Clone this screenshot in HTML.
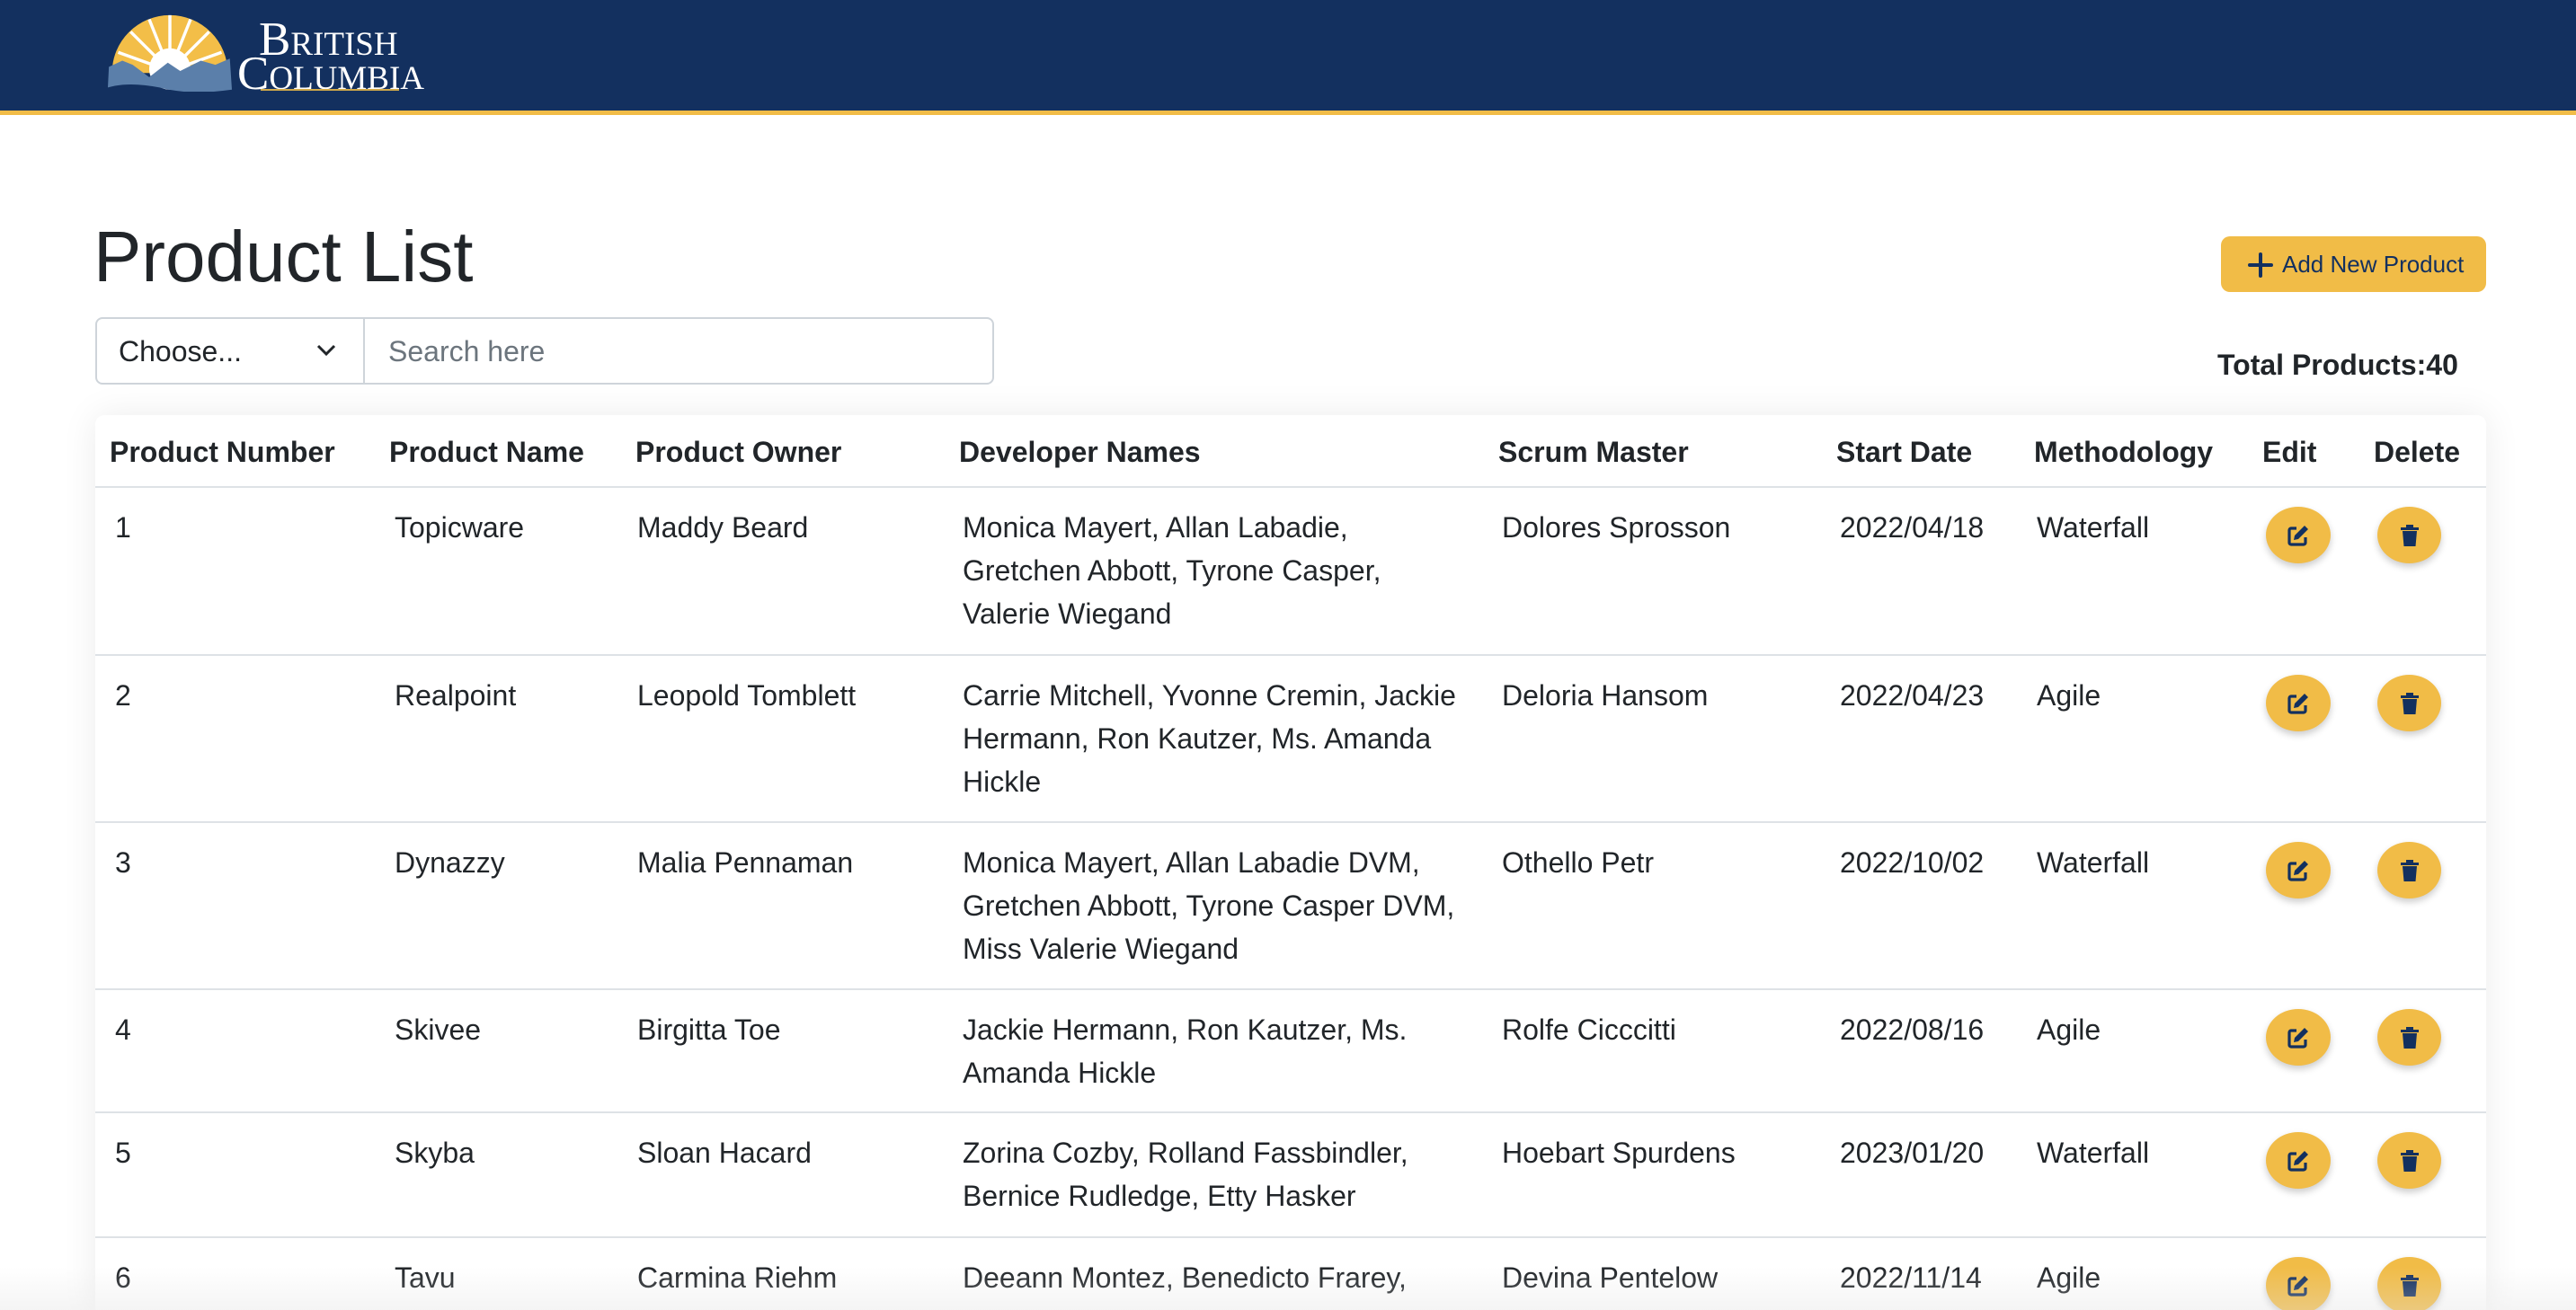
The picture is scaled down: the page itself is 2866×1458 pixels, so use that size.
<!DOCTYPE html>
<html><head><meta charset="utf-8"><style>
*{box-sizing:border-box;margin:0;padding:0}
html,body{width:2866px;height:1458px;overflow:hidden}
body{background:#fff;font-family:"Liberation Sans",Arial,sans-serif;color:#212529;position:relative}
.hdr{position:absolute;left:0;top:0;width:2866px;height:128px;background:#13305f;border-bottom:5px solid #f1bc47}
.bc{position:absolute;color:#fff;font-family:"Liberation Serif",serif;font-variant:small-caps;line-height:1}
h1{position:absolute;left:104px;top:246px;font-size:80px;font-weight:400;line-height:1;color:#212529}
.inp{position:absolute;left:106px;top:353px;width:1000px;height:75px;border:2px solid #ced4da;border-radius:8px;font-size:32px}
.sel{position:absolute;left:0;top:0;width:298px;height:71px;border-right:2px solid #ced4da;padding:18px 0 0 24px}
.ph{position:absolute;left:324px;top:18px;color:#6c757d}
.btn{position:absolute;left:2471px;top:263px;width:295px;height:62px;background:#f1bc47;border-radius:10px;color:#13305f;font-size:26px;padding:16px 0 0 68px}
.tot{position:absolute;left:2467px;top:388px;font-size:32px;font-weight:700}
.card{position:absolute;left:106px;top:462px;width:2660px;height:996px;background:#fff;border-radius:10px 10px 0 0;box-shadow:0 0 40px rgba(0,0,0,.08);overflow:hidden}
.row{position:absolute;left:0;width:2660px;border-bottom:2px solid #dee2e6}
.c{position:absolute;top:0;white-space:nowrap;font-size:32px;line-height:48px}
.h .c{font-weight:700;top:17px}
.b .c{top:20px}
.ib{position:absolute;top:21px;width:72px;height:63px;border-radius:50%;background:#f1bc47;box-shadow:0 4px 8px rgba(0,0,0,.2);display:flex;align-items:center;justify-content:center}
.fade{position:absolute;left:0;top:1410px;width:2866px;height:48px;background:linear-gradient(rgba(235,235,235,0),rgba(225,225,225,.35))}
</style></head><body>
<div class="hdr">
<svg style="position:absolute;left:120px;top:10px" width="138" height="92" viewBox="0 0 120 80">
<path d="M4 62 A56 56 0 0 1 116 62 Z" fill="#f3be48"/>
<g stroke="#fff" stroke-width="3">
<line x1="60" y1="60" x2="60" y2="6"/><line x1="60" y1="60" x2="40" y2="10"/><line x1="60" y1="60" x2="80" y2="10"/>
<line x1="60" y1="60" x2="22" y2="22"/><line x1="60" y1="60" x2="98" y2="22"/><line x1="60" y1="60" x2="10" y2="42"/><line x1="60" y1="60" x2="110" y2="42"/></g>
<circle cx="60" cy="58" r="20" fill="#fff"/>
<path d="M1 56 L14 50 L24 54 L40 66 L58 52 L70 60 L90 50 L104 54 L118 48 L120 78 Q80 84 50 76 Q20 70 0 76 Z" fill="#5b7faa"/>
</svg>
<div class="bc" style="left:288px;top:18px;font-size:53px">British</div>
<div class="bc" style="left:264px;top:56px;font-size:53px">Columbia</div>
<div style="position:absolute;left:290px;top:99px;width:154px;height:2px;background:#d0a94a"></div>
</div>
<h1>Product List</h1>
<div class="inp"><div class="sel">Choose...<svg style="position:absolute;left:244px;top:28px" width="22" height="14" viewBox="0 0 22 14"><path d="M2 2 L11 11 L20 2" fill="none" stroke="#212529" stroke-width="3"/></svg></div><div class="ph">Search here</div></div>
<div class="btn"><svg style="position:absolute;left:30px;top:18px" width="28" height="28" viewBox="0 0 28 28"><path d="M14 2V26M2 14H26" stroke="#13305f" stroke-width="4" stroke-linecap="round"/></svg>Add New Product</div>
<div class="tot">Total Products:40</div>
<div class="card">
<div class="row h" style="top:0;height:81px">
<div class="c" style="left:16px">Product Number</div><div class="c" style="left:327px">Product Name</div><div class="c" style="left:601px">Product Owner</div><div class="c" style="left:961px">Developer Names</div><div class="c" style="left:1561px">Scrum Master</div><div class="c" style="left:1937px">Start Date</div><div class="c" style="left:2157px">Methodology</div><div class="c" style="left:2411px">Edit</div><div class="c" style="left:2535px">Delete</div>
</div>
<div id="rows"></div>
</div>
<div class="fade"></div>
<script>
var d=[["1","Topicware","Maddy Beard","Monica Mayert, Allan Labadie,<br>Gretchen Abbott, Tyrone Casper,<br>Valerie Wiegand","Dolores Sprosson","2022/04/18","Waterfall",187],
["2","Realpoint","Leopold Tomblett","Carrie Mitchell, Yvonne Cremin, Jackie<br>Hermann, Ron Kautzer, Ms. Amanda<br>Hickle","Deloria Hansom","2022/04/23","Agile",186],
["3","Dynazzy","Malia Pennaman","Monica Mayert, Allan Labadie DVM,<br>Gretchen Abbott, Tyrone Casper DVM,<br>Miss Valerie Wiegand","Othello Petr","2022/10/02","Waterfall",186],
["4","Skivee","Birgitta Toe","Jackie Hermann, Ron Kautzer, Ms.<br>Amanda Hickle","Rolfe Cicccitti","2022/08/16","Agile",137],
["5","Skyba","Sloan Hacard","Zorina Cozby, Rolland Fassbindler,<br>Bernice Rudledge, Etty Hasker","Hoebart Spurdens","2023/01/20","Waterfall",139],
["6","Tavu","Carmina Riehm","Deeann Montez, Benedicto Frarey,","Devina Pentelow","2022/11/14","Agile",187]];
var edit='<svg width="26" height="26" viewBox="0 0 26 26"><path d="M11 5H5a2 2 0 0 0-2 2v14a2 2 0 0 0 2 2h14a2 2 0 0 0 2-2v-6" fill="none" stroke="#13305f" stroke-width="3.2"/><path d="M20 2l4 4-11 11-5 1 1-5z" fill="#13305f"/></svg>';
var del='<svg width="22" height="26" viewBox="0 0 22 26"><path d="M1 4h20v3H1zM7 1h8v3H7zM3 8h16l-1.5 17h-13z" fill="#13305f"/></svg>';
var y=81,h='',L=[22,333,603,965,1565,1941,2160];
d.forEach(function(r){h+='<div class="row b" style="top:'+y+'px;height:'+r[7]+'px">';for(var i=0;i<7;i++)h+='<div class="c" style="left:'+L[i]+'px">'+r[i]+'</div>';h+='<div class="ib" style="left:2415px">'+edit+'</div><div class="ib" style="left:2539px;width:71px">'+del+'</div></div>';y+=r[7];});
document.getElementById('rows').innerHTML=h;
</script>
</body></html>
